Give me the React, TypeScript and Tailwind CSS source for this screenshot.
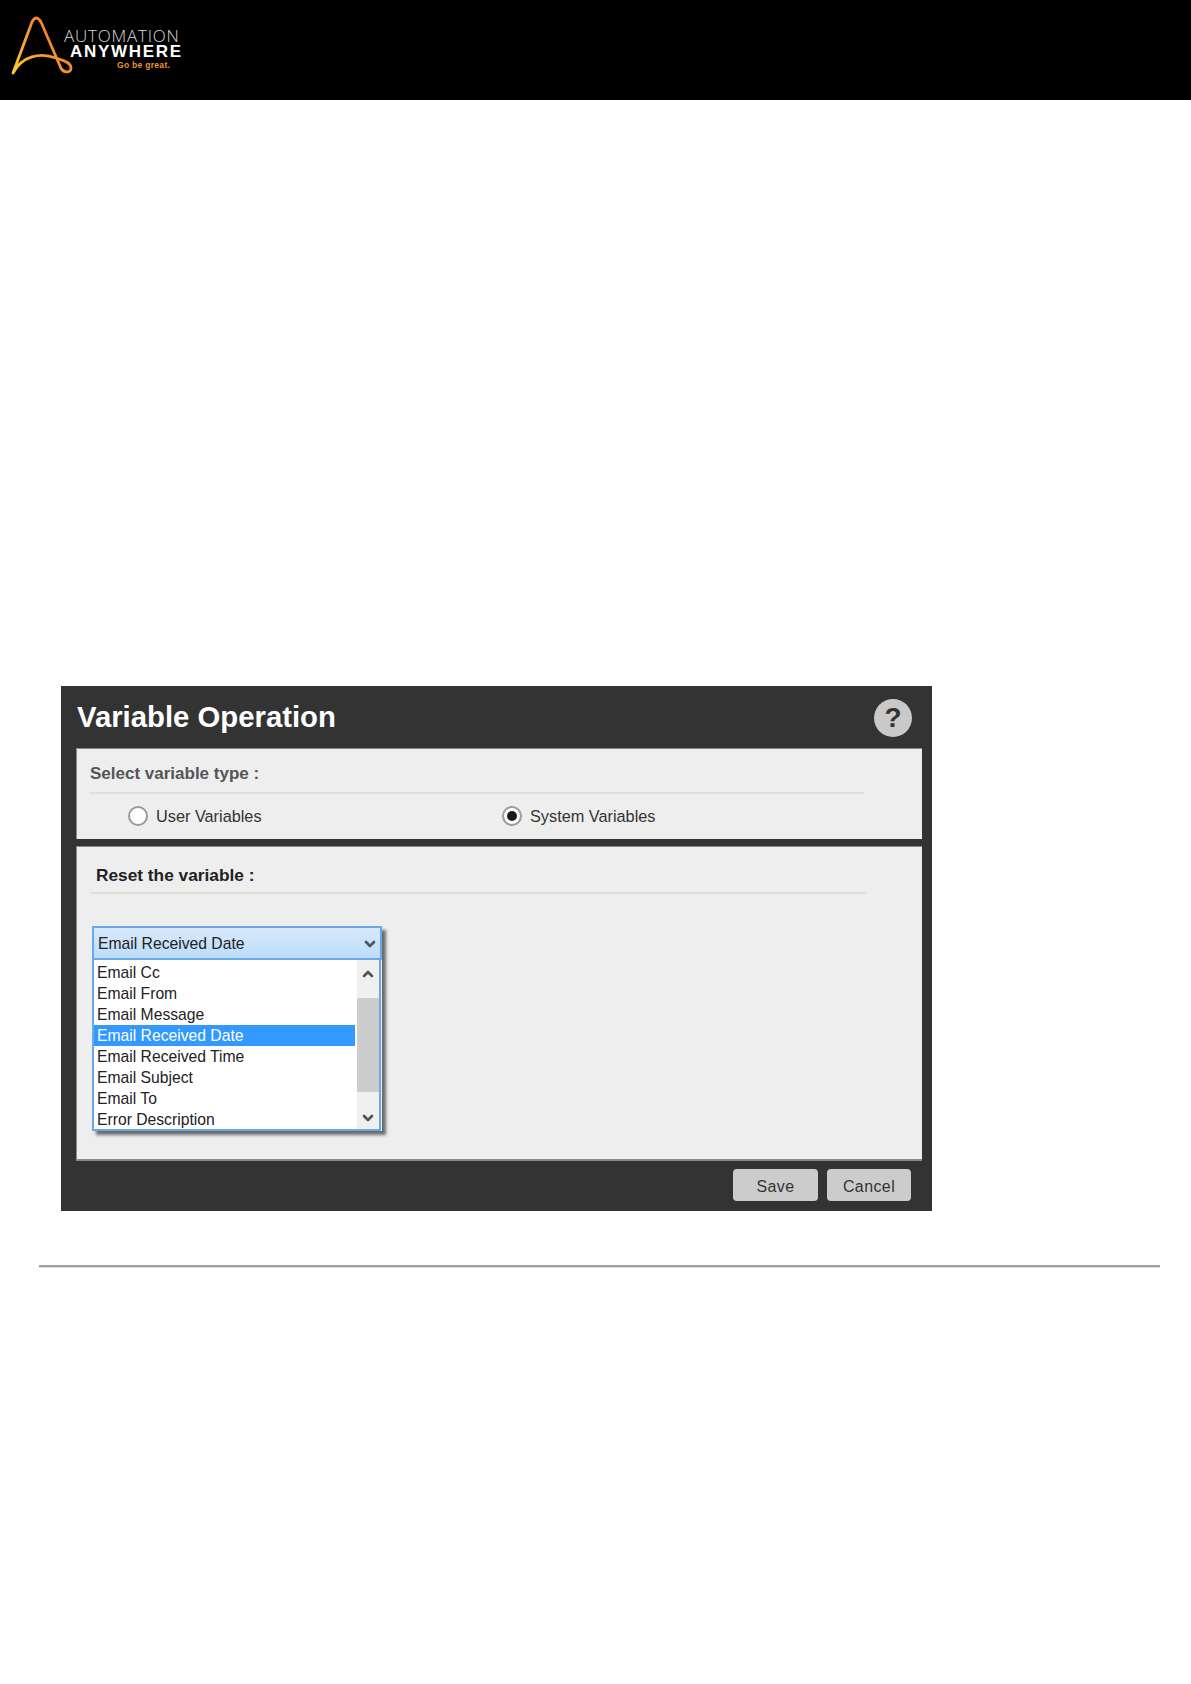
import { ChevronDown, ChevronUp } from 'lucide-react';

const options = ['Email Cc', 'Email From', 'Email Message', 'Email Received Date', 'Email Received Time', 'Email Subject', 'Email To', 'Error Description'];

function Logo() {
  return (
    <div className="relative w-[190px] h-[100px]">
      <svg className="absolute left-0 top-0" width="80" height="80" viewBox="0 0 80 80" fill="none">
        <defs>
          <linearGradient id="logoA" x1="12" y1="74" x2="70" y2="30" gradientUnits="userSpaceOnUse">
            <stop offset="0" stopColor="#fbd02c" />
            <stop offset="0.55" stopColor="#f7962c" />
            <stop offset="1" stopColor="#ee6a2c" />
          </linearGradient>
        </defs>
        <path d="M13 73 L32 22 Q36 14 41 22 L60 66 C62 73 71 74 71 68 C71 62 62 60 56 58 C40 52 22 56 13 73 Z" stroke="url(#logoA)" strokeWidth="2.8" strokeLinejoin="round" />
      </svg>
      <div className="absolute left-[64px] top-[30px] text-[17px] leading-[12px] text-[#d8d8d8] font-light tracking-[0.8px] font-['Open_Sans',sans-serif] whitespace-nowrap">AUTOMATION</div>
      <div className="absolute left-[70px] top-[46px] text-[17px] leading-[12px] font-bold text-white tracking-[1.7px] font-['Liberation_Sans',sans-serif] whitespace-nowrap">ANYWHERE</div>
      <div className="absolute left-[117px] top-[60px] text-[8.5px] leading-[10px] font-bold text-[#f0922c] tracking-[0.3px] font-['Liberation_Sans',sans-serif] whitespace-nowrap">Go be great.</div>
    </div>
  );
}

function Radio({ checked, label, className }: { checked?: boolean; label: string; className: string }) {
  return (
    <div className={`flex items-center gap-2 ${className}`}>
      <div className="w-5 h-5 rounded-full bg-white border-2 border-[#9a9a9a] flex items-center justify-center">
        {checked && <div className="w-2.5 h-2.5 rounded-full bg-[#1c1c1c]" />}
      </div>
      <span className="text-[16.3px] leading-5 text-[#333]">{label}</span>
    </div>
  );
}

export default function App() {
  return (
    <div className="min-h-[1684px] bg-white font-['Liberation_Sans',Arial,sans-serif]">
      <div className="bg-black h-[100px]">
        <Logo />
      </div>

      <div className="pt-[586px] pl-[61px]">
        <div className="w-[871px] h-[525px] bg-[#333333] flex flex-col">
          {/* title bar */}
          <div className="h-[62px] flex items-center justify-between pl-4 pr-5">
            <h1 className="text-[29.3px] font-bold text-white leading-none">Variable Operation</h1>
            <div className="w-[38px] h-[38px] mt-[1px] rounded-full bg-[#c9c9c9] flex items-center justify-center text-[28px] font-bold text-[#333] leading-none">?</div>
          </div>

          {/* variable type */}
          <div className="ml-[15px] w-[846px] h-[91px] bg-[#eeeeee] border border-[#8a8a8a] border-r-0 border-b-0 pl-3">
            <div className="w-[775px] h-[45px] border-b-2 border-[#e0e0d4] pt-[15px] pl-[1px] text-[17px] leading-5 font-bold text-[#555]">Select variable type :</div>
            <div className="flex pt-[12px]">
              <Radio label="User Variables" className="ml-[39px] w-[374px]" />
              <Radio checked label="System Variables" />
            </div>
          </div>

          {/* reset */}
          <div className="ml-[15px] mt-[7px] w-[846px] h-[315px] bg-[#eeeeee] border border-[#8a8a8a] border-r-0 border-b-2 pl-[14px]">
            <div className="w-[775px] h-[47px] border-b-2 border-[#e0e0d4] pt-[18px] pl-[5px] text-[17.3px] leading-5 font-bold text-[#222]">Reset the variable :</div>

            <div className="mt-[32px] ml-[1px] w-[290px] shadow-[4px_4px_3px_rgba(0,0,0,0.55)]">
              <div className="h-[34px] pt-[1px] border-2 border-[#6aa9e9] bg-gradient-to-b from-[#d7e9fb] to-[#bcdcfa] flex items-center justify-between pl-[4px] pr-[2px] text-[15.7px] text-[#222]">
                <span>Email Received Date</span>
                <ChevronDown size={16} strokeWidth={4} className="text-[#555]" />
              </div>
              <div className="h-[171px] w-[289px] border-2 border-t-0 border-[#6aa9e9] bg-white flex">
                <div className="w-[261px] pt-[2px]">
                  {options.map((o) => (
                    <div key={o} className={`h-[21px] leading-[21px] pl-[3px] text-[15.7px] ${o === 'Email Received Date' ? 'bg-[#3399ff] text-white' : 'text-[#222]'}`}>{o}</div>
                  ))}
                </div>
                <div className="ml-[2px] flex-1 bg-[#f0f0f0] flex flex-col items-center justify-between">
                  <div className="h-[38px] pt-[6px]"><ChevronUp size={16} strokeWidth={4} className="text-[#555]" /></div>
                  <div className="w-full h-[94px] bg-[#cdcdcd]" />
                  <div className="h-[37px] pt-[18px]"><ChevronDown size={16} strokeWidth={4} className="text-[#555]" /></div>
                </div>
              </div>
            </div>
          </div>

          {/* footer */}
          <div className="flex justify-end gap-[9px] pt-[8px] pr-[21px]">
            <button className="w-[85px] h-[32px] pt-[3px] rounded-[4px] bg-[#cccccc] text-[16px] tracking-[0.4px] text-[#333]">Save</button>
            <button className="w-[84px] h-[32px] pt-[3px] rounded-[4px] bg-[#cccccc] text-[16px] tracking-[0.4px] text-[#333]">Cancel</button>
          </div>
        </div>
      </div>

      <div className="mt-[54px] ml-[39px] w-[1121px] h-[3px] border-t-2 border-[#a0a0a0] border-b border-b-[#dddddd]" />
    </div>
  );
}
